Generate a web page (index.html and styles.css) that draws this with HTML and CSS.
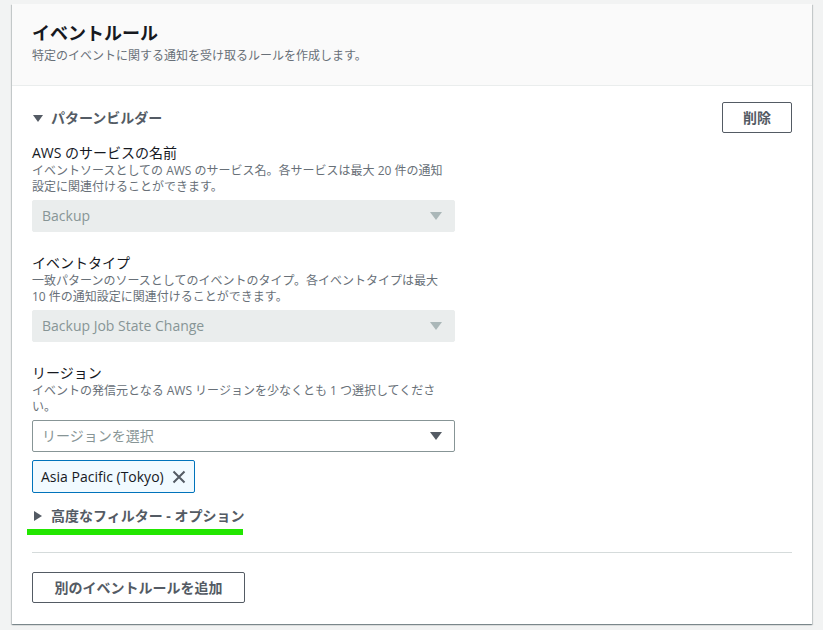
FILE: index.html
```html
<!DOCTYPE html>
<html lang="ja">
<head>
<meta charset="utf-8">
<title>イベントルール</title>
<link rel="stylesheet" href="styles.css">
</head>
<body>
<div class="card">
  <div class="card-header">
    <h2 class="title">イベントルール</h2>
    <p class="subtitle">特定のイベントに関する通知を受け取るルールを作成します。</p>
  </div>
  <div class="card-body">
    <div class="builder-row">
      <div class="expander">
        <svg class="caret" width="10" height="10" viewBox="0 0 10 10"><path d="M0 2 H10 L5 9 Z" fill="#545b64"/></svg>
        <span>パターンビルダー</span>
      </div>
      <button class="btn btn-delete">削除</button>
    </div>

    <div class="field field-first">
      <div class="label">AWS のサービスの名前</div>
      <div class="desc">イベントソースとしての AWS のサービス名。各サービスは最大 20 件の通知<br>設定に関連付けることができます。</div>
      <div class="select disabled">
        <span>Backup</span>
        <svg class="arrow" width="12" height="10" viewBox="0 0 12 10"><path d="M0 1 H12 L6 9 Z" fill="#aab7b8"/></svg>
      </div>
    </div>

    <div class="field">
      <div class="label">イベントタイプ</div>
      <div class="desc">一致パターンのソースとしてのイベントのタイプ。各イベントタイプは最大<br>10 件の通知設定に関連付けることができます。</div>
      <div class="select disabled">
        <span>Backup Job State Change</span>
        <svg class="arrow" width="12" height="10" viewBox="0 0 12 10"><path d="M0 1 H12 L6 9 Z" fill="#aab7b8"/></svg>
      </div>
    </div>

    <div class="field">
      <div class="label">リージョン</div>
      <div class="desc">イベントの発信元となる AWS リージョンを少なくとも 1 つ選択してくださ<br>い。</div>
      <div class="select active">
        <span>リージョンを選択</span>
        <svg class="arrow" width="12" height="10" viewBox="0 0 12 10"><path d="M0 1 H12 L6 9 Z" fill="#545b64"/></svg>
      </div>
      <div class="token">
        <span>Asia Pacific (Tokyo)</span>
        <svg class="x" width="14" height="14" viewBox="0 0 14 14"><path d="M1.5 1.5 L12.5 12.5 M12.5 1.5 L1.5 12.5" stroke="#545b64" stroke-width="2" fill="none"/></svg>
      </div>
    </div>

    <div class="advanced">
      <div class="expander">
        <svg class="caret" width="10" height="10" viewBox="0 0 10 10"><path d="M1 0 V10 L9 5 Z" fill="#545b64"/></svg>
        <span>高度なフィルター - オプション</span>
      </div>
      <div class="highlight"></div>
    </div>

    <div class="divider"></div>

    <button class="btn btn-add">別のイベントルールを追加</button>
  </div>
</div>
</body>
</html>
```

FILE: styles.css
```css
* { box-sizing: border-box; }
html, body { margin: 0; padding: 0; }
body {
  background: #f2f3f3;
  font-family: "Open Sans", "Noto Sans CJK JP", sans-serif;
  color: #16191f;
  width: 823px;
  height: 630px;
  overflow: hidden;
}
.card {
  margin: 4px 0 0 12px;
  width: 800px;
  height: 620px;
  background: #fff;
  box-shadow: 0 1px 1px 0 rgba(0,28,36,.3), 1px 1px 1px 0 rgba(0,28,36,.15), -1px 1px 1px 0 rgba(0,28,36,.15);
}
.card-header {
  background: #fafafa;
  border-bottom: 1px solid #eaeded;
  height: 82px;
  padding: 18px 20px 0 20px;
}
.title {
  margin: 0;
  font-size: 18px;
  line-height: 22px;
  font-weight: 700;
  color: #16191f;
}
.subtitle {
  margin: 4px 0 0 0;
  font-size: 12px;
  line-height: 16px;
  color: #687078;
}
.card-body {
  padding: 16px 20px 0 20px;
}
.builder-row {
  display: flex;
  justify-content: space-between;
  align-items: center;
  height: 31px;
}
.expander {
  display: flex;
  align-items: center;
  gap: 8px;
  font-size: 14px;
  line-height: 20px;
  font-weight: 700;
  color: #545b64;
}
.caret { display: block; margin-left: 1px; }
.btn {
  background: #fff;
  border: 1px solid #545b64;
  border-radius: 2px;
  font-family: "Open Sans", "Noto Sans CJK JP", sans-serif;
  font-size: 14px;
  font-weight: 700;
  color: #545b64;
  height: 31px;
  padding: 0 20px;
  line-height: 20px;
  cursor: pointer;
}
.btn-delete { width: 70px; padding: 0; }
.btn-add { width: 213px; padding: 0; margin-top: 19px; }
.field { margin-top: 21px; width: 423px; }
.field-first { margin-top: 10px; }
.label {
  font-size: 14px;
  line-height: 20px;
  color: #16191f;
}
.desc {
  font-size: 12px;
  line-height: 16px;
  color: #687078;
}
.select {
  margin-top: 5px;
  height: 32px;
  border-radius: 2px;
  display: flex;
  align-items: center;
  justify-content: space-between;
  padding: 0 12px 0 9px;
  font-size: 14px;
  line-height: 20px;
}
.select.disabled {
  background: #eaeded;
  color: #879596;
  border: 1px solid #eaeded;
}
.select.active {
  background: #fff;
  color: #879596;
  border: 1px solid #879596;
}
.arrow { display: block; }
.token {
  margin-top: 8px;
  display: inline-flex;
  align-items: center;
  gap: 8px;
  height: 33px;
  padding: 0 8px 0 8px;
  background: #f1faff;
  border: 1px solid #0073bb;
  border-radius: 2px;
  font-size: 14px;
  line-height: 20px;
  color: #16191f;
}
.x { display: block; }
.advanced { margin-top: 13px; }
.highlight {
  margin: 3px 0 0 -5px;
  width: 216px;
  height: 6px;
  background: #22e600;
}
.divider {
  margin-top: 17px;
  height: 1px;
  background: #d5dbdb;
}
```
